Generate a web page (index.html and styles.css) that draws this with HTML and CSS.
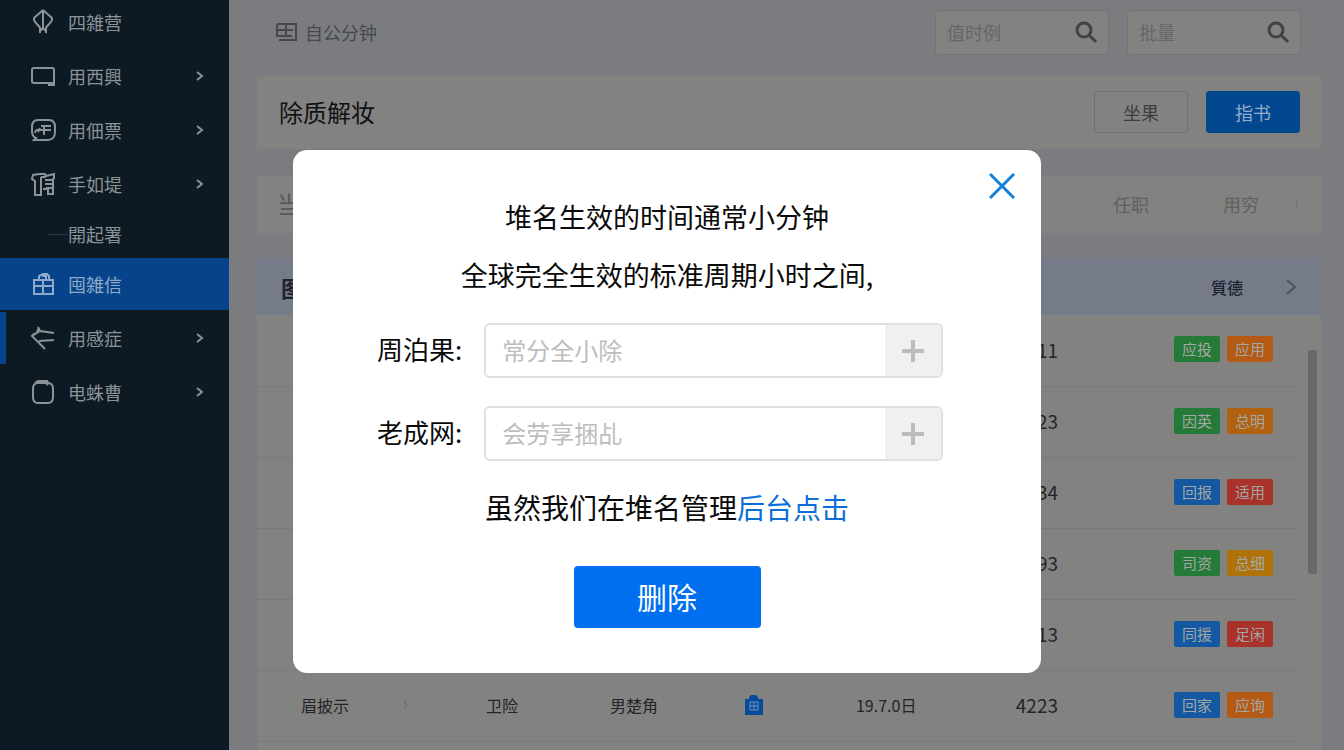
FILE: index.html
```
<!DOCTYPE html>
<html lang="zh-CN">
<head>
    <meta charset="UTF-8">
    <meta name="viewport" content="width=device-width, initial-scale=1.0">
    <title>堆名管理</title>
    <link rel="stylesheet" href="styles.css">
</head>
<body>
    <div class="layout">
        <nav class="sidebar">
            <a href="#" class="nav-item">
                <svg class="nav-icon" viewBox="0 0 26 26"><path d="M13 1L4 9c-1 4 4 6 6 10v5M13 1l9 8c1 4-4 6-6 10v5M13 2v19M10 22l3-3 3 3"/></svg>
                <span>四雑营</span>
            </a>
            <a href="#" class="nav-item">
                <svg class="nav-icon" viewBox="0 0 26 26"><path d="M17 20H4a2 2 0 0 1-2-2V7a2 2 0 0 1 2-2h18a2 2 0 0 1 2 2v15h-6M16 20h8"/></svg>
                <span>用西興</span>
                <svg class="chevron" viewBox="0 0 10 12"><path d="M2 2l5 4-5 4"/></svg>
            </a>
            <a href="#" class="nav-item">
                <svg class="nav-icon" viewBox="0 0 26 26"><path d="M8 3h11c4 0 6 3 6 7v5c0 5-3 8-7 8H4l2-2c-3-1-4-4-4-7v-4c0-4 2-7 6-7zM11 9h10M6 13h15M14 8v10M6 13l-1 3M10 11l-2 4"/></svg>
                <span>用佃票</span>
                <svg class="chevron" viewBox="0 0 10 12"><path d="M2 2l5 4-5 4"/></svg>
            </a>
            <a href="#" class="nav-item">
                <svg class="nav-icon" viewBox="0 0 26 26"><path d="M9 3L3 4 2 8l3 2v14h6V6M9 3h6l1 2 8-2v4l-1 1v15h-5v-5h-5M11 6h5M15 9h8M15 13h8M16 17h7M11 24V10"/></svg>
                <span>手如堤</span>
                <svg class="chevron" viewBox="0 0 10 12"><path d="M2 2l5 4-5 4"/></svg>
            </a>
            <a href="#" class="nav-item nav-sub"><span>開起署</span></a>
            <a href="#" class="nav-item nav-current">
                <svg class="nav-icon" viewBox="0 0 26 26"><path d="M4 9h19v14H4zM4 15h19M13 9v14M9 9V5l4-2h4l2 2v4M12 5h4v3"/></svg>
                <span>囤雑信</span>
            </a>
            <a href="#" class="nav-item nav-marked">
                <svg class="nav-icon" viewBox="0 0 26 26"><path d="M24 8L10 6 8 2M10 6l-8 5 13 13M2 11l3-3M9 16l15-1M8 4l-1 4"/></svg>
                <span>用感症</span>
                <svg class="chevron" viewBox="0 0 10 12"><path d="M2 2l5 4-5 4"/></svg>
            </a>
            <a href="#" class="nav-item">
                <svg class="nav-icon" viewBox="0 0 26 26"><path d="M8 4h10c3 0 5 2 5 6v8c0 4-2 6-5 6H8c-3 0-5-2-5-6v-8c0-4 2-6 5-6zM5 4l3-2h9l2 3M14 2l4 4"/></svg>
                <span>电蛛曹</span>
                <svg class="chevron" viewBox="0 0 10 12"><path d="M2 2l5 4-5 4"/></svg>
            </a>
        </nav>

        <main class="main">
            <header class="topbar">
                <svg class="crumb-icon" viewBox="0 0 24 20"><path d="M2 2h19v12M2 2v12h15M4 18h17V4M2 8h16M11 2v12"/></svg>
                <span class="crumb">自公分钟</span>
                <label class="search">
                    <input type="text" placeholder="值时例" aria-label="值时例">
                    <svg class="search-icon" viewBox="0 0 24 24"><circle cx="10" cy="10" r="7"/><path d="M15 15l7 7"/></svg>
                </label>
                <label class="search">
                    <input type="text" placeholder="批量" aria-label="批量">
                    <svg class="search-icon" viewBox="0 0 24 24"><circle cx="10" cy="10" r="7"/><path d="M15 15l7 7"/></svg>
                </label>
            </header>

            <section class="card title-card">
                <h1 class="title">除质解妆</h1>
                <button class="btn">坐果</button>
                <button class="btn btn-blue">指书</button>
            </section>

            <section class="card tabs-card">
                <span class="tabs-first">当</span>
                <a href="#" class="tab">任职</a>
                <a href="#" class="tab">用穷</a>
                <svg class="tab-more" viewBox="0 0 6 16"><path d="M2 2c3 4 3 8 0 12"/></svg>
            </section>

            <section class="card panel">
                <table class="records">
                    <colgroup>
                        <col>
                        <col class="col-type">
                        <col class="col-owner">
                        <col class="col-icon">
                        <col class="col-date">
                        <col class="col-number">
                        <col class="col-actions">
                        <col class="col-edge">
                    </colgroup>
                    <thead>
                        <tr>
                            <th class="head-first">图</th>
                            <th colspan="5"></th>
                            <th colspan="2">
                                <div class="head-actions">
                                    <span>質德</span>
                                    <svg class="head-arrow" viewBox="0 0 12 18"><path d="M2 2l8 7-8 7"/></svg>
                                </div>
                            </th>
                        </tr>
                    </thead>
                    <tbody>
                        <tr>
                            <td colspan="5"></td>
                            <td class="number">11</td>
                            <td><div class="actions"><button class="tag green">应投</button><button class="tag orange">应用</button></div></td>
                            <td></td>
                        </tr>
                        <tr>
                            <td colspan="5"></td>
                            <td class="number">23</td>
                            <td><div class="actions"><button class="tag green">因英</button><button class="tag amber">总明</button></div></td>
                            <td></td>
                        </tr>
                        <tr>
                            <td colspan="5"></td>
                            <td class="number">34</td>
                            <td><div class="actions"><button class="tag blue">回报</button><button class="tag red">适用</button></div></td>
                            <td></td>
                        </tr>
                        <tr>
                            <td colspan="5"></td>
                            <td class="number">93</td>
                            <td><div class="actions"><button class="tag green">司资</button><button class="tag yellow">总细</button></div></td>
                            <td></td>
                        </tr>
                        <tr>
                            <td colspan="5"></td>
                            <td class="number">13</td>
                            <td><div class="actions"><button class="tag blue">同援</button><button class="tag red">足闲</button></div></td>
                            <td></td>
                        </tr>
                        <tr>
                            <td>
                                <div class="name">
                                    <span>眉披示</span>
                                    <svg class="name-arrow" viewBox="0 0 6 10"><path d="M1 1l3 4-3 4"/></svg>
                                </div>
                            </td>
                            <td>卫险</td>
                            <td>男楚角</td>
                            <td>
                                <svg class="case" viewBox="0 0 20 20"><path class="case-body" d="M1 4h4V2l2-2h5l2 2v2h5v16H1z"/><path class="case-mark" d="M6 7h8v8H6zM6 11h8M10 7v8"/></svg>
                            </td>
                            <td>19.7.0日</td>
                            <td class="number">4223</td>
                            <td><div class="actions"><button class="tag blue">回家</button><button class="tag orange">应询</button></div></td>
                            <td></td>
                        </tr>
                    </tbody>
                </table>
                <div class="scroll-thumb"></div>
            </section>
        </main>
    </div>

    <div class="overlay">
        <div class="modal" role="dialog" aria-modal="true">
            <button class="close" aria-label="关闭">
                <svg viewBox="0 0 26 26"><path d="M1 1l24 24M25 1L1 25"/></svg>
            </button>
            <p class="message">堆名生效的时间通常小分钟</p>
            <p class="message">全球完全生效的标准周期小时之间,</p>
            <form class="form">
                <label for="cycle">周泊果:</label>
                <div class="field">
                    <input type="text" id="cycle" placeholder="常分全小除">
                    <button type="button" class="add" aria-label="增加">
                        <svg viewBox="0 0 22 22"><path d="M11 0v22M0 11h22"/></svg>
                    </button>
                </div>
                <label for="limit">老成网:</label>
                <div class="field">
                    <input type="text" id="limit" placeholder="会劳享捆乩">
                    <button type="button" class="add" aria-label="增加">
                        <svg viewBox="0 0 22 22"><path d="M11 0v22M0 11h22"/></svg>
                    </button>
                </div>
            </form>
            <p class="note">虽然我们在堆名管理<a href="#">后台点击</a></p>
            <button class="delete">删除</button>
        </div>
    </div>
</body>
</html>
```
FILE: styles.css
```
* {
    margin: 0;
    padding: 0;
    box-sizing: border-box;
}

body {
    font-family: "Noto Sans CJK SC", sans-serif;
    font-size: 16px;
    color: #222428;
    background: #7b7c80;
}

button,
input {
    font-family: inherit;
}

button {
    cursor: pointer;
}

a {
    text-decoration: none;
}

svg {
    display: block;
    flex-shrink: 0;
    fill: none;
    stroke: currentColor;
}

.layout {
    display: flex;
    height: 100vh;
    overflow: hidden;
}

/* sidebar */
.sidebar {
    width: 229px;
    flex-shrink: 0;
    margin-top: -4px;
    background: #0e1a23;
}

.nav-item {
    display: flex;
    align-items: center;
    gap: 12px;
    height: 52px;
    margin-bottom: 2px;
    padding: 0 24px 0 30px;
    font-size: 18px;
    color: #8b9298;
}

.nav-icon {
    width: 26px;
    height: 26px;
    stroke-width: 2;
}

.chevron {
    width: 10px;
    height: 12px;
    margin-left: auto;
    stroke-width: 2;
}

.nav-sub {
    height: 44px;
    padding-left: 48px;
    gap: 0;
}

.nav-sub::before {
    content: "";
    width: 20px;
    height: 1px;
    background: #2b363e;
}

.nav-current {
    background: #07438a;
    color: #8fa9c8;
}

.nav-marked {
    padding-left: 24px;
    border-left: 6px solid #07438a;
}

/* content */
.main {
    flex: 1;
    min-width: 0;
    display: flex;
    flex-direction: column;
    padding: 0 23px 0 28px;
}

.topbar {
    display: flex;
    align-items: center;
    flex-shrink: 0;
    height: 76px;
    padding: 0 20px 12px 18px;
    color: #46484b;
}

.crumb-icon {
    width: 24px;
    height: 20px;
    margin-right: 6px;
    stroke-width: 2;
}

.crumb {
    flex: 1;
    font-size: 18px;
}

.search {
    display: flex;
    align-items: center;
    width: 174px;
    height: 45px;
    margin-left: 18px;
    padding: 0 10px 0 11px;
    background: #828281;
    border: 1px solid #727375;
    border-radius: 4px;
}

.search input {
    flex: 1;
    min-width: 0;
    font-size: 18px;
    background: none;
    border: none;
    outline: none;
}

.search input::placeholder {
    color: #666666;
}

.search-icon {
    width: 24px;
    height: 24px;
    color: #414243;
    stroke-width: 3;
}

.card {
    flex-shrink: 0;
    background: #828281;
}

.title-card {
    display: flex;
    align-items: center;
    gap: 18px;
    height: 73px;
    padding: 0 21px 2px 22px;
}

.title {
    flex: 1;
    font-size: 24px;
    font-weight: 400;
    color: #101112;
}

.btn {
    width: 94px;
    height: 42px;
    font-size: 18px;
    color: #3a3f44;
    background: none;
    border: 1px solid #6f7071;
    border-radius: 3px;
}

.btn-blue {
    color: #93acc8;
    background: #02478f;
    border-color: #02478f;
}

.tabs-card {
    display: flex;
    align-items: center;
    height: 57px;
    margin: 27px 0 25px;
    padding: 0 22px 2px 20px;
    font-size: 18px;
    color: #626262;
}

.tabs-first {
    flex: 1;
    font-size: 24px;
    color: #585858;
}

.tab {
    margin-right: 74px;
    color: #606060;
}

.tab + .tab {
    margin-right: 34px;
}

.tab-more {
    width: 6px;
    height: 16px;
    stroke: #717171;
}

/* records */
.panel {
    position: relative;
    flex: 1;
}

.records {
    width: 100%;
    table-layout: fixed;
    border-collapse: collapse;
}

.col-type { width: 124px; }
.col-owner { width: 134px; }
.col-icon { width: 112px; }
.col-date { width: 90px; }
.col-number { width: 112px; }
.col-actions { width: 239px; }
.col-edge { width: 24px; }

.records th {
    height: 57px;
    font-weight: 500;
    text-align: left;
    color: #1d2230;
    background: #757b88;
}

.records .head-first {
    padding-left: 24px;
    font-size: 22px;
    font-weight: 700;
}

.head-actions {
    display: flex;
    align-items: center;
    justify-content: space-between;
    padding: 0 24px 0 153px;
}

.head-arrow {
    width: 12px;
    height: 18px;
    color: #50545e;
    stroke-width: 2;
}

.records td {
    height: 71px;
    padding-bottom: 2px;
    white-space: nowrap;
    border-bottom: 1px solid #7a7a79;
}

.records td:last-child {
    border-bottom: none;
}

.records .number {
    font-size: 19px;
    text-align: right;
}

.name {
    display: flex;
    align-items: center;
    gap: 54px;
    padding-left: 44px;
}

.name-arrow {
    width: 6px;
    height: 10px;
    color: #626262;
}

.case {
    width: 20px;
    height: 20px;
}

.case-body {
    fill: #07499a;
    stroke: none;
}

.case-mark {
    stroke: #6f93bf;
}

.actions {
    display: flex;
    gap: 7px;
    padding-left: 116px;
}

.tag {
    width: 46px;
    height: 26px;
    font-size: 15px;
    line-height: 24px;
    color: #a2a8a6;
    border: none;
    border-radius: 2px;
}

.green { background: #257a37; }
.blue { background: #1358a0; }
.orange { background: #b45a14; }
.amber { background: #b0620f; }
.yellow { background: #b0730a; }
.red { background: #a9322a; }

.scroll-thumb {
    position: absolute;
    top: 92px;
    right: 4px;
    width: 9px;
    height: 224px;
    background: #686868;
    border-radius: 2px;
}

/* dialog */
.overlay {
    position: fixed;
    inset: 0;
    display: flex;
    align-items: flex-start;
    justify-content: center;
    padding: 150px 10px 0 0;
}

.modal {
    position: relative;
    display: flex;
    flex-direction: column;
    align-items: center;
    width: 100%;
    max-width: 748px;
    padding: 47px 84px 45px;
    color: #0a0a0a;
    background: #ffffff;
    border-radius: 14px;
}

.close {
    position: absolute;
    top: 23px;
    right: 26px;
    width: 26px;
    height: 26px;
    color: #1480dc;
    background: none;
    border: none;
}

.close svg {
    stroke-width: 3;
}

.message {
    margin-bottom: 18px;
    font-size: 27px;
    line-height: 40px;
}

.form {
    display: grid;
    grid-template-columns: auto 1fr;
    align-items: center;
    gap: 28px 22px;
    width: 100%;
    margin: 10px 0 25px;
    padding-right: 14px;
    font-size: 26px;
}

.form label {
    padding-bottom: 4px;
}

.field {
    display: flex;
    height: 55px;
    border: 2px solid #e0e0e0;
    border-radius: 6px;
    overflow: hidden;
}

.field input {
    flex: 1;
    min-width: 0;
    padding: 0 16px 2px;
    font-size: 24px;
    border: none;
    outline: none;
}

.field input::placeholder {
    color: #bdbdbd;
}

.add {
    display: flex;
    align-items: center;
    justify-content: center;
    width: 56px;
    color: #bcbcbc;
    background: #f0f0f0;
    border: none;
}

.add svg {
    width: 22px;
    height: 22px;
    stroke-width: 4;
}

.note {
    margin-bottom: 38px;
    font-size: 28px;
    line-height: 42px;
}

.note a {
    color: #0a6fd6;
}

.delete {
    width: 187px;
    height: 62px;
    padding-bottom: 2px;
    font-size: 30px;
    color: #ffffff;
    background: #0070f0;
    border: none;
    border-radius: 4px;
}
```
